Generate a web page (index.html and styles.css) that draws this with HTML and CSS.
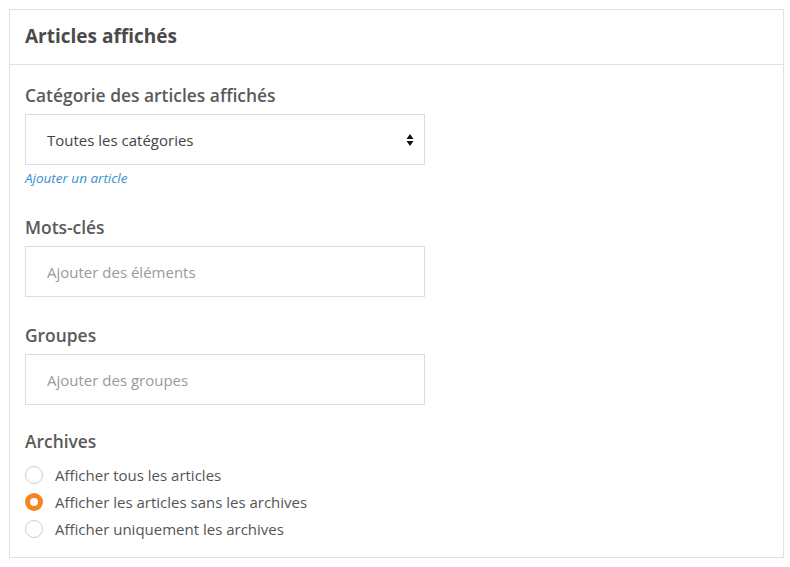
FILE: index.html
```html
<!DOCTYPE html>
<html lang="fr">
<head>
    <meta charset="UTF-8">
    <meta name="viewport" content="width=device-width, initial-scale=1.0">
    <title>Articles affichés</title>
    <link rel="stylesheet" href="styles.css">
</head>
<body>
    <div class="panel">
        <div class="panel-header">Articles affichés</div>
        <div class="panel-body">
            <div class="field">
                <label class="field-label" for="category">Catégorie des articles affichés</label>
                <div class="select-wrap">
                    <select id="category">
                        <option>Toutes les catégories</option>
                    </select>
                    <svg class="select-arrows" width="8" height="14" viewBox="0 0 8 14">
                        <path d="M4 1 L7.5 6 L0.5 6 Z M4 13 L7.5 8 L0.5 8 Z" fill="#111"/>
                    </svg>
                </div>
                <a class="field-link" href="#">Ajouter un article</a>
            </div>
            <div class="field">
                <label class="field-label" for="tags">Mots-clés</label>
                <input type="text" id="tags" placeholder="Ajouter des éléments">
            </div>
            <div class="field">
                <label class="field-label" for="groups">Groupes</label>
                <input type="text" id="groups" placeholder="Ajouter des groupes">
            </div>
            <div class="field archives">
                <div class="field-label">Archives</div>
                <div class="radio-list">
                    <label class="radio"><span class="radio-dot"></span>Afficher tous les articles</label>
                    <label class="radio checked"><span class="radio-dot"></span>Afficher les articles sans les archives</label>
                    <label class="radio"><span class="radio-dot"></span>Afficher uniquement les archives</label>
                </div>
            </div>
        </div>
    </div>
</body>
</html>
```

FILE: styles.css
```css
body {
    font-family: "Open Sans", Lato, sans-serif;
    margin: 0;
    padding: 9px;
    background-color: #fff;
    color: #4f4f4f;
}
.panel {
    width: 775px;
    height: 549px;
    border: 1px solid #e1e1e1;
    box-sizing: border-box;
}
.panel-header {
    height: 55px;
    box-sizing: border-box;
    padding: 13px 15px 0;
    font-size: 19px;
    font-weight: bold;
    color: #4a4a4a;
    border-bottom: 1px solid #e1e1e1;
}
.panel-body {
    padding: 19px 15px 0;
}
.field {
    display: flex;
    flex-direction: column;
    align-items: flex-start;
    margin-bottom: 27px;
}
.field.archives {
    margin-top: -2px;
}
.field-label {
    display: block;
    font-size: 17.4px;
    line-height: 22px;
    font-weight: 600;
    color: #5a5a5a;
    margin-bottom: 8px;
}
.select-wrap {
    position: relative;
    width: 400px;
}
.select-wrap select,
.field input {
    display: block;
    width: 400px;
    height: 51px;
    padding: 0 21px;
    border: 1px solid #d6dee6;
    border-radius: 0;
    background: #fff;
    font-family: inherit;
    font-size: 15px;
    color: #444;
    box-sizing: border-box;
    outline: none;
}
.select-wrap select {
    -webkit-appearance: none;
    appearance: none;
}
.field input::placeholder {
    color: #9a9a9a;
}
.select-arrows {
    position: absolute;
    right: 11px;
    top: 19px;
}
.field-link {
    display: block;
    margin-top: 5px;
    margin-bottom: 2px;
    font-size: 13.5px;
    line-height: 17px;
    font-style: italic;
    color: #3b8fcf;
    text-decoration: none;
}
.radio-list {
    display: flex;
    flex-direction: column;
    gap: 7px;
    margin-top: 5px;
}
.radio {
    display: flex;
    align-items: center;
    height: 20px;
    font-size: 15px;
    color: #555;
}
.radio-dot {
    width: 18px;
    height: 18px;
    border: 1px solid #c9ced8;
    border-radius: 50%;
    box-sizing: border-box;
    margin-right: 12px;
}
.radio.checked .radio-dot {
    border: 5px solid #f7821e;
    background: #fff;
}
```
